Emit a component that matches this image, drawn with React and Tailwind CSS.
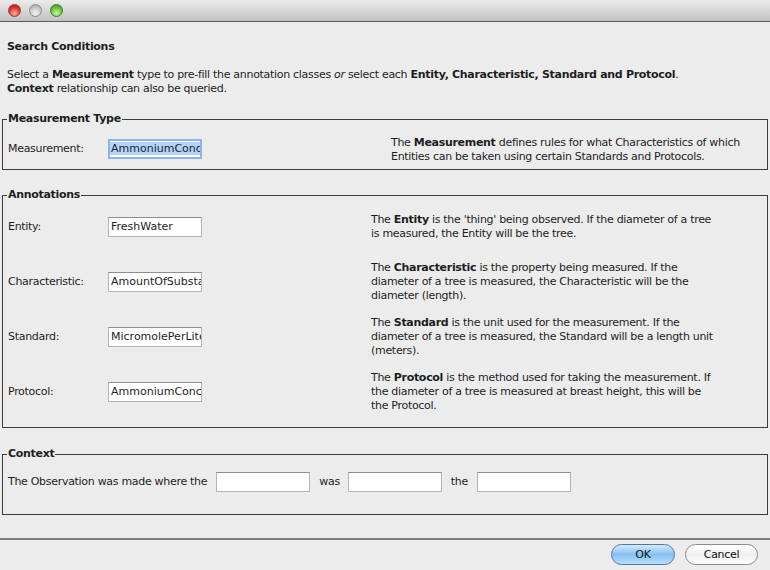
const annotations = [
  {
    label: "Entity:",
    value: "FreshWater",
    term: "Entity",
    lines: [
      " is the 'thing' being observed. If the diameter of a tree",
      "is measured, the Entity will be the tree.",
    ],
  },
  {
    label: "Characteristic:",
    value: "AmountOfSubstanceConcentration",
    term: "Characteristic",
    lines: [
      " is the property being measured. If the",
      "diameter of a tree is measured, the Characteristic will be the",
      "diameter (length).",
    ],
  },
  {
    label: "Standard:",
    value: "MicromolePerLiter",
    term: "Standard",
    lines: [
      " is the unit used for the measurement. If the",
      "diameter of a tree is measured, the Standard will be a length unit",
      "(meters).",
    ],
  },
  {
    label: "Protocol:",
    value: "AmmoniumConcentrationProtocol",
    term: "Protocol",
    lines: [
      " is the method used for taking the measurement. If",
      "the diameter of a tree is measured at breast height, this will be",
      "the Protocol.",
    ],
  },
];

function Field({ value, className = "" }) {
  return (
    <div
      className={`h-[20px] bg-white border border-[#b4b4b4] border-t-[#8e8e8e] pl-[2px] leading-[18px] tracking-normal overflow-hidden whitespace-nowrap text-[#1e1e1e] ${className}`}
    >
      {value}
    </div>
  );
}

function Light({ color }) {
  return <div className={`w-[13px] h-[13px] rounded-full border ${color}`} />;
}

export default function App() {
  return (
    <div className="w-[770px] h-[570px] bg-[#ececec] font-['DejaVu_Sans',sans-serif] text-[11px] leading-[14px] tracking-[-0.3px] text-[#1e1e1e] flex flex-col overflow-hidden">
      {/* title bar */}
      <div className="h-[22px] shrink-0 bg-gradient-to-b from-[#ececec] to-[#c2c2c2] border-b border-[#5c5c5c] flex items-center gap-[8px] pl-[8px]">
        <Light color="border-[#9b3a33] bg-[radial-gradient(circle_at_50%_75%,#ffb3a8,#e2362c_55%,#a01810)]" />
        <Light color="border-[#8c8c8c] bg-[radial-gradient(circle_at_50%_75%,#f4f4f4,#c9c9c9_55%,#9a9a9a)]" />
        <Light color="border-[#3f7d2a] bg-[radial-gradient(circle_at_50%_75%,#c9f7a4,#6cc43c_55%,#2f8a18)]" />
      </div>

      <div className="px-[2px] flex flex-col">
        <div className="pl-[5px] pt-[18px] font-bold">Search Conditions</div>
        <div className="pl-[5px] mt-[14px]">
          Select a <b>Measurement</b> type to pre-fill the annotation classes{" "}
          <i>or</i> select each <b>Entity, Characteristic, Standard and Protocol</b>.
          <br />
          <b>Context</b> relationship can also be queried.
        </div>

        {/* Measurement Type */}
        <fieldset className="mt-[16px] border border-[#3c3c3c] pl-[5px] pb-[5px]">
          <legend className="-ml-[1px] px-[1px] font-bold">Measurement Type</legend>
          <div className="flex items-start pt-[10px]">
            <div className="w-[100px] mt-[3px] leading-[20px]">Measurement:</div>
            <div className="mt-[3px] w-[94px] h-[20px] bg-white border-2 border-[#8db4ea] leading-[16px] tracking-normal overflow-hidden whitespace-nowrap">
              <span className="bg-[#b3d3fd] pl-[1px]">AmmoniumConcentration</span>
            </div>
            <div className="ml-[189px]">
              The <b>Measurement</b> defines rules for what Characteristics of which
              <br />
              Entities can be taken using certain Standards and Protocols.
            </div>
          </div>
        </fieldset>

        {/* Annotations */}
        <fieldset className="mt-[18px] border border-[#3c3c3c] pl-[5px] pb-[8px]">
          <legend className="-ml-[1px] px-[1px] font-bold">Annotations</legend>
          <div className="-mt-[3px] flex flex-col">
            {annotations.map((a) => (
              <div key={a.label} className="h-[55px] flex items-center">
                <div className="w-[100px]">{a.label}</div>
                <Field value={a.value} className="w-[94px]" />
                <div className="ml-[169px]">
                  The <b>{a.term}</b>
                  {a.lines[0]}
                  {a.lines.slice(1).map((l) => (
                    <div key={l}>{l}</div>
                  ))}
                </div>
              </div>
            ))}
          </div>
        </fieldset>

        {/* Context */}
        <fieldset className="mt-[19px] border border-[#3c3c3c] pl-[5px] pb-[22px]">
          <legend className="-ml-[1px] px-[1px] font-bold">Context</legend>
          <div className="pt-[11px] flex items-center">
            <span>The Observation was made where the</span>
            <Field value="" className="w-[94px] ml-[9px]" />
            <span className="ml-[9px]">was</span>
            <Field value="" className="w-[94px] ml-[8px]" />
            <span className="ml-[9px]">the</span>
            <Field value="" className="w-[94px] ml-[9px]" />
          </div>
        </fieldset>
      </div>

      <div className="mt-[23px] h-[2px] bg-[#7d7d7d]" />

      <div className="flex justify-end gap-[10px] pr-[12px] pt-[4px]">
        <button className="w-[64px] h-[21px] rounded-full border border-[#4f77ab] bg-gradient-to-b from-[#d4ebfd] via-[#86bff3] to-[#b9defc] text-[#111] leading-[19px]">
          OK
        </button>
        <button className="w-[73px] h-[21px] rounded-full border border-[#8a8a8a] bg-gradient-to-b from-[#ffffff] via-[#f0f0f0] to-[#fcfcfc] text-[#111] leading-[19px]">
          Cancel
        </button>
      </div>
    </div>
  );
}
